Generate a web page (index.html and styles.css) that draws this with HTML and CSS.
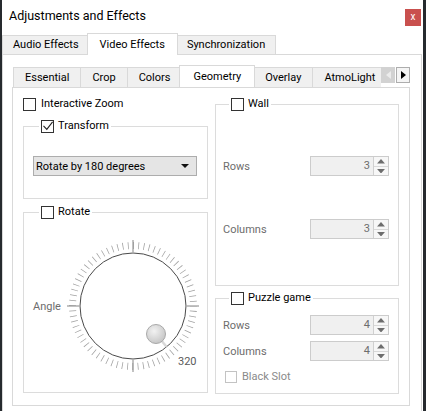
FILE: index.html
```html
<!DOCTYPE html>
<html lang="en">
<head>
<meta charset="utf-8">
<title>Adjustments and Effects</title>
<link rel="stylesheet" href="styles.css">
</head>
<body>
<div class="window">
  <div class="titlebar">
    <span class="title">Adjustments and Effects</span>
    <span class="close">x</span>
  </div>
  <div class="tabs outer-tabs">
    <div class="tab">Audio Effects</div>
    <div class="tab selected">Video Effects</div>
    <div class="tab">Synchronization</div>
  </div>
  <div class="pane outer-pane">
    <div class="inner-tabbar">
      <div class="tabs inner-tabs">
        <div class="tab">Essential</div>
        <div class="tab">Crop</div>
        <div class="tab">Colors</div>
        <div class="tab selected">Geometry</div>
        <div class="tab">Overlay</div>
        <div class="tab">AtmoLight</div>
      </div>
      <div class="scroller">
        <span class="scroll-btn disabled"><svg width="5" height="8" viewBox="0 0 5 8"><path d="M5 0 L0 4 L5 8 Z"/></svg></span>
        <span class="scroll-btn"><svg width="5" height="8" viewBox="0 0 5 8"><path d="M0 0 L5 4 L0 8 Z"/></svg></span>
      </div>
    </div>
    <div class="pane inner-pane">
      <div class="col">
        <div class="check-row">
          <span class="box"></span><span>Interactive Zoom</span>
        </div>
        <fieldset class="group transform">
          <legend><span class="box"><svg width="13" height="13" viewBox="0 0 13 13"><polyline points="2.5,5.8 5.8,9.3 11.6,1.8" fill="none" stroke="#222" stroke-width="1.1"/></svg></span><span>Transform</span></legend>
          <div class="combo">
            <span>Rotate by 180 degrees</span>
            <svg width="8" height="4" viewBox="0 0 8 4"><path d="M0 0 H8 L4 4 Z" fill="#111"/></svg>
          </div>
        </fieldset>
        <fieldset class="group rotate">
          <legend><span class="box"></span><span>Rotate</span></legend>
          <div class="dial-row">
            <span class="muted">Angle</span>
            <svg class="dial" width="140" height="140" viewBox="0 0 140 140">
              <circle cx="70" cy="70" r="60.5" fill="none" stroke="#a0a0a0" stroke-width="7" stroke-dasharray="0.75 4.5296" stroke-dashoffset="0.375"/>
              <g stroke="#858585" stroke-width="1">
                <line x1="70" y1="4" x2="70" y2="16"/>
                <line x1="70" y1="124" x2="70" y2="136"/>
                <line x1="4" y1="70" x2="16" y2="70"/>
                <line x1="124" y1="70" x2="136" y2="70"/>
              </g>
              <circle cx="70" cy="70" r="53" fill="#fff" stroke="#4a4a4a" stroke-width="1"/>
              <line x1="98.6" y1="104.8" x2="103.5" y2="110.8" stroke="#d8d8d8" stroke-width="2.5"/>
              <defs>
                <radialGradient id="knob" cx="0.4" cy="0.35" r="0.7">
                  <stop offset="0" stop-color="#f2f2f2"/>
                  <stop offset="1" stop-color="#c4c4c4"/>
                </radialGradient>
              </defs>
              <circle cx="93" cy="98" r="9.5" fill="url(#knob)" stroke="#a9a9a9" stroke-width="1"/>
              <text x="115" y="128.5" class="dial-value">320</text>
            </svg>
          </div>
        </fieldset>
      </div>
      <div class="col">
        <fieldset class="group wall">
          <legend><span class="box"></span><span>Wall</span></legend>
          <div class="field-row">
            <span class="muted">Rows</span>
            <div class="spin"><span class="spin-value">3</span><span class="spin-btns"><svg width="7" height="4" viewBox="0 0 7 4"><path d="M0 4 L3.5 0 L7 4 Z"/></svg><svg width="7" height="4" viewBox="0 0 7 4"><path d="M0 0 L7 0 L3.5 4 Z"/></svg></span></div>
          </div>
          <div class="field-row wall-gap">
            <span class="muted">Columns</span>
            <div class="spin"><span class="spin-value">3</span><span class="spin-btns"><svg width="7" height="4" viewBox="0 0 7 4"><path d="M0 4 L3.5 0 L7 4 Z"/></svg><svg width="7" height="4" viewBox="0 0 7 4"><path d="M0 0 L7 0 L3.5 4 Z"/></svg></span></div>
          </div>
        </fieldset>
        <fieldset class="group puzzle">
          <legend><span class="box"></span><span>Puzzle game</span></legend>
          <div class="field-row">
            <span class="muted">Rows</span>
            <div class="spin"><span class="spin-value">4</span><span class="spin-btns"><svg width="7" height="4" viewBox="0 0 7 4"><path d="M0 4 L3.5 0 L7 4 Z"/></svg><svg width="7" height="4" viewBox="0 0 7 4"><path d="M0 0 L7 0 L3.5 4 Z"/></svg></span></div>
          </div>
          <div class="field-row puzzle-gap">
            <span class="muted">Columns</span>
            <div class="spin"><span class="spin-value">4</span><span class="spin-btns"><svg width="7" height="4" viewBox="0 0 7 4"><path d="M0 4 L3.5 0 L7 4 Z"/></svg><svg width="7" height="4" viewBox="0 0 7 4"><path d="M0 0 L7 0 L3.5 4 Z"/></svg></span></div>
          </div>
          <div class="check-row disabled-row">
            <span class="box disabled"></span><span>Black Slot</span>
          </div>
        </fieldset>
      </div>
    </div>
  </div>
</div>
</body>
</html>
```

FILE: styles.css
```css
* { box-sizing: border-box; }

html, body {
  margin: 0;
  height: 100%;
  overflow: hidden;
}

body {
  background: #262a2e;
  font-family: Roboto, "Noto Sans", sans-serif;
  font-size: 11px;
  color: #000;
}

.window {
  margin-left: 2px;
  width: 421px;
  height: 411px;
  background: #fff;
  display: flex;
  flex-direction: column;
  overflow: hidden;
}

.titlebar {
  height: 33px;
  flex: none;
  display: flex;
  justify-content: space-between;
  align-items: flex-start;
  padding: 0 2px 0 7px;
}

.title {
  font-size: 12.5px;
  line-height: 16px;
  margin-top: 8px;
}

.close {
  width: 16px;
  height: 17px;
  margin-top: 9px;
  background: #c9504e;
  color: #fff;
  font-size: 10px;
  line-height: 15px;
  text-align: center;
}

.tabs {
  display: flex;
  align-items: flex-end;
  flex: none;
}

.tab {
  flex: none;
  height: 19px;
  line-height: 18px;
  padding: 0 10px;
  background: #f0f0f0;
  border: 1px solid #d9d9d9;
  border-bottom: none;
  margin-right: -1px;
  white-space: nowrap;
}

.tab.selected {
  background: #fff;
  margin: 0 -2px -1px;
  padding: 0 12px 1px;
  height: 23px;
  line-height: 21px;
  position: relative;
  z-index: 1;
}

.outer-tabs {
  height: 21px;
}

.outer-tabs .tab {
  height: 19px;
}

.outer-tabs .tab.selected {
  height: 22px;
}

.pane {
  border: 1px solid #d9d9d9;
  background: #fff;
}

.outer-pane {
  flex: none;
  margin-right: 1px;
  padding: 9px 11px 12px 9px;
}

.inner-tabbar {
  display: flex;
  align-items: flex-end;
  height: 23px;
  padding-left: 1px;
}

.inner-tabs {
  flex: 1;
  overflow: hidden;
  height: 23px;
}

.inner-tabs .tab {
  height: 20px;
  line-height: 19px;
  padding: 0 11px;
}

.inner-tabs .tab.selected {
  height: 23px;
  line-height: 21px;
  padding: 0 13px 1px;
}

.scroller {
  display: flex;
  flex: none;
  align-self: flex-start;
  margin-top: 3px;
  gap: 1px;
}

.scroll-btn {
  width: 14px;
  height: 16px;
  display: flex;
  align-items: center;
  justify-content: center;
  border: 1px solid #adadad;
  background: #f5f5f5;
  fill: #000;
}

.scroll-btn.disabled {
  background: #d2d2d2;
  border-color: #d2d2d2;
  fill: #ececec;
}

.inner-pane {
  display: flex;
  gap: 7px;
  padding: 9px 9px 11px 10px;
}

.col {
  display: flex;
  flex-direction: column;
}

.col:first-child { width: 185px; }
.col:last-child { width: 184px; }

.box {
  width: 13px;
  height: 13px;
  border: 1px solid #333;
  background: #fff;
  flex: none;
  display: inline-flex;
  align-items: center;
  justify-content: center;
}

.box svg {
  margin: -1px;
}

.check-row {
  display: flex;
  align-items: center;
  gap: 5px;
  height: 14px;
  line-height: 14px;
}

.col:first-child > .check-row {
  margin-bottom: 8px;
}

.group {
  margin: 0;
  border: 1px solid #dcdcdc;
  padding: 0;
  min-width: 0;
}

.group legend {
  display: flex;
  align-items: center;
  gap: 4px;
  height: 14px;
  line-height: 14px;
  padding: 0 2px;
  margin-left: 6px;
}

.transform {
  padding: 23px 10px 22px 9px;
}

.combo {
  height: 20px;
  border: 1px solid #adadad;
  background: #e5e5e5;
  display: flex;
  align-items: center;
  justify-content: space-between;
  padding: 0 7px 0 2px;
}

.rotate {
  margin-top: 6px;
  padding: 17px 0 16px 9px;
}

.dial-row {
  display: flex;
  align-items: center;
  gap: 2px;
}

.dial { display: block; }

.dial-value {
  font-family: Roboto, "Noto Sans", sans-serif;
  font-size: 11px;
  fill: #5a5a5a;
}

.muted {
  color: #6d6d6d;
}

.wall {
  padding: 45px 9px 46px 7px;
}

.puzzle {
  margin-top: 5px;
  padding: 10px 9px 9px 7px;
}

.field-row {
  display: flex;
  align-items: center;
  justify-content: space-between;
  height: 20px;
}

.wall-gap { margin-top: 43px; }
.puzzle-gap { margin-top: 6px; }

.spin {
  width: 79px;
  height: 20px;
  border: 1px solid #cccccc;
  background: #f0f0f0;
  display: flex;
}

.spin-value {
  flex: 1;
  text-align: right;
  line-height: 18px;
  padding-right: 3px;
  color: #6d6d6d;
}

.spin-btns {
  width: 15px;
  display: flex;
  flex-direction: column;
  border-left: 1px solid #d0d0d0;
  fill: #6d6d6d;
}

.spin-btns svg {
  flex: 1;
  width: 100%;
  padding: 2px 3px;
  background: #f7f7f7;
}

.spin-btns svg + svg {
  border-top: 1px solid #d8d8d8;
}

.disabled-row {
  margin-top: 9px;
  padding-left: 2px;
  color: #8a8a8a;
}

.box.disabled {
  width: 12px;
  height: 12px;
  border-color: #c3c3c3;
}
```
